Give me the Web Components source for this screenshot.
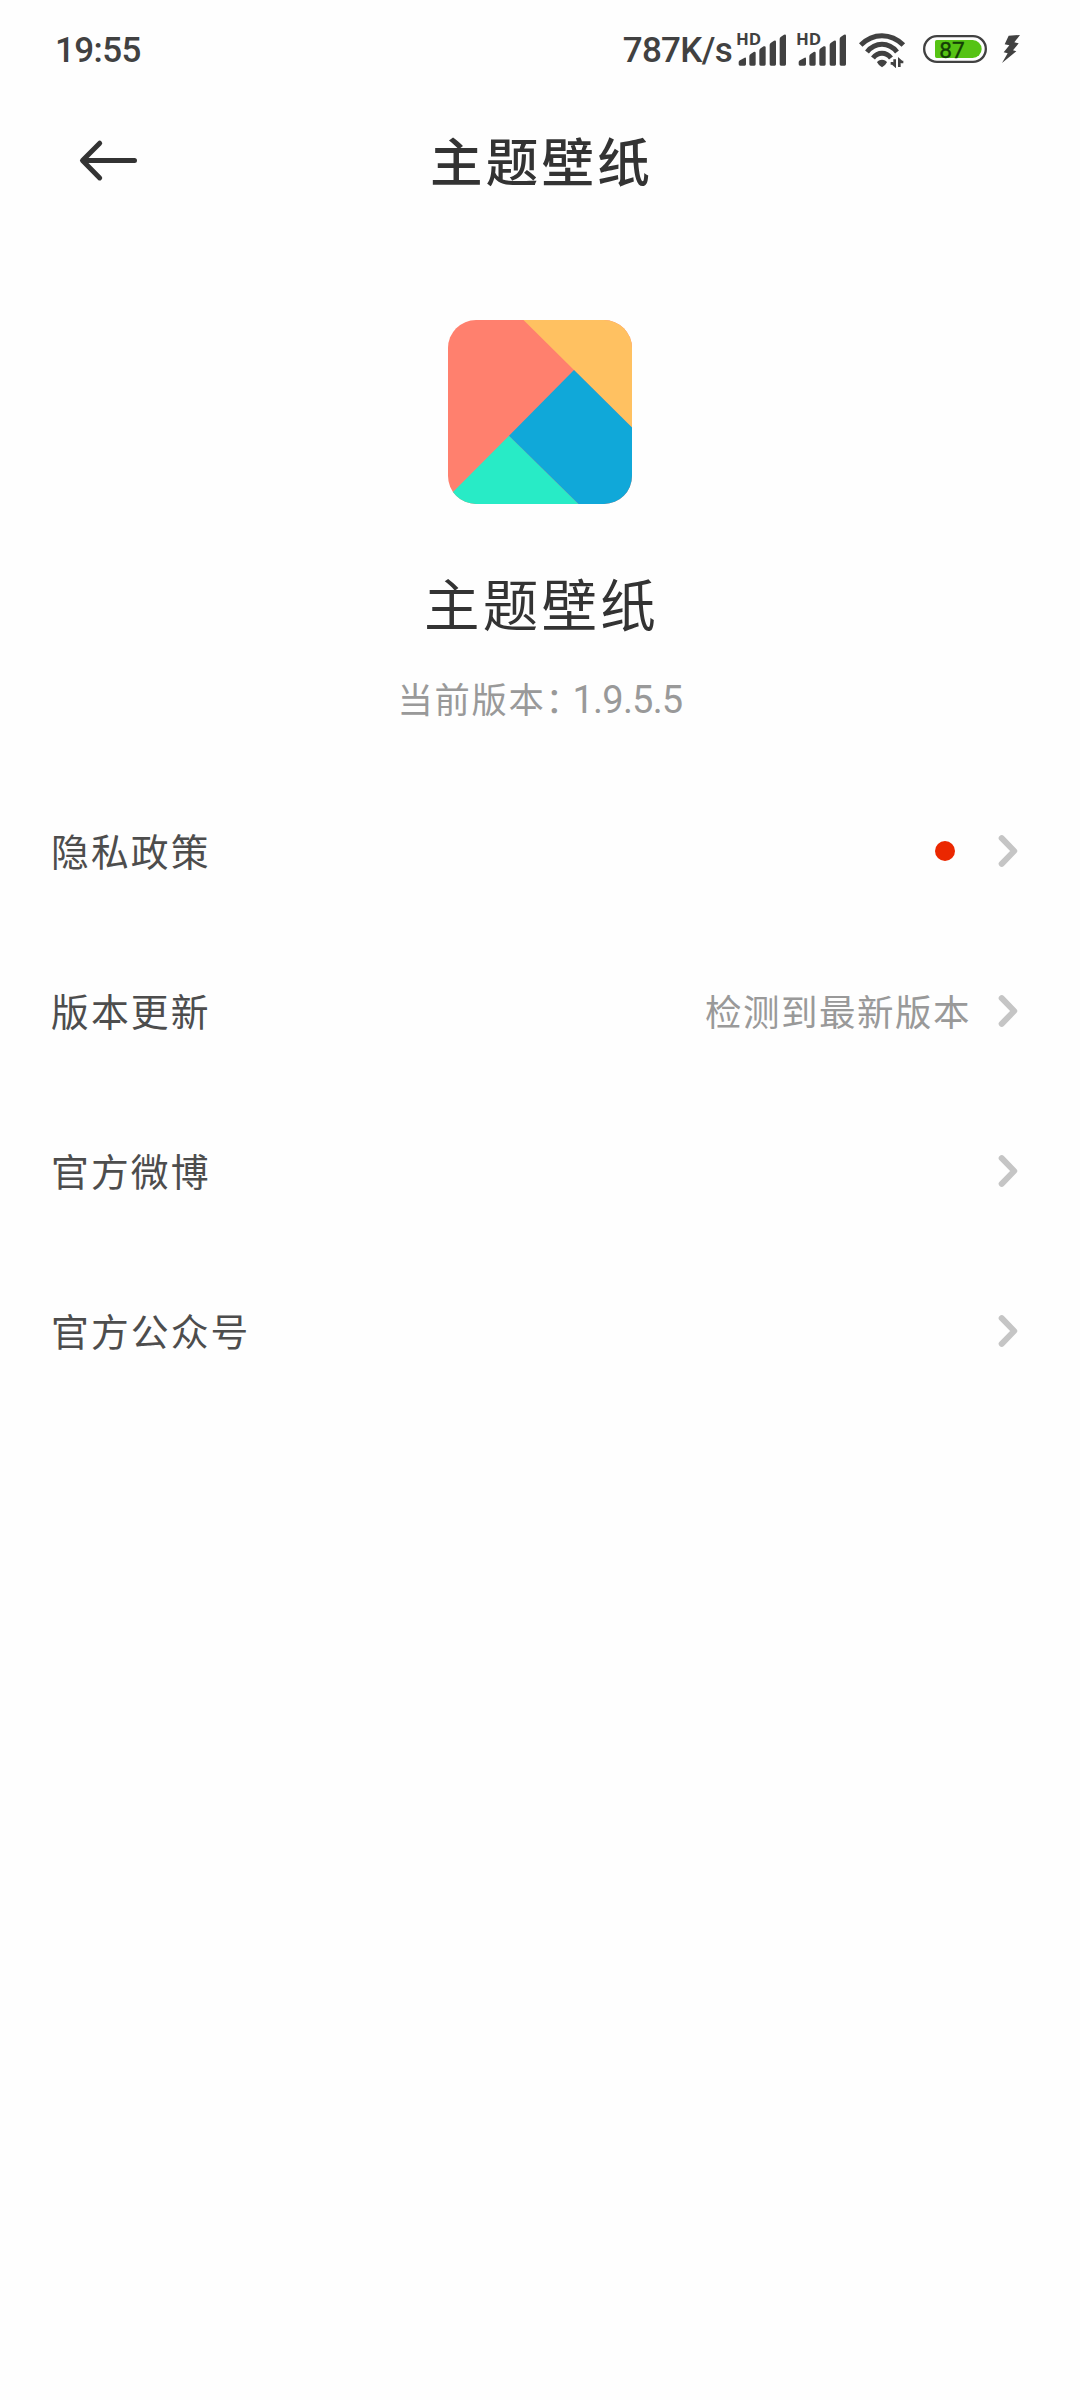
<!DOCTYPE html>
<html lang="zh-CN">
<head>
<meta charset="utf-8">
<title>主题壁纸</title>
<style>
html,body{margin:0;background:#fefefe}
body{width:1080px;min-height:2400px;font-family:Roboto,"Noto Sans CJK SC",sans-serif;color:#333}
</style>
</head>
<body>
<about-page></about-page>
<script>
const define = (name, html) => {
  const t = document.createElement('template');
  t.innerHTML = html;
  customElements.define(name, class extends HTMLElement {
    constructor() {
      super();
      this.attachShadow({mode: 'open'}).append(t.content.cloneNode(true));
    }
  });
};

define('signal-bars', `<style>:host{display:block;width:60px;height:34px;flex:none}svg{display:block;overflow:visible}</style>
<svg width="60" height="34" viewBox="0 0 180 102" fill="#414141">
<text x="-3" y="37" font-family="Open Sans,sans-serif" font-weight="700" font-size="49" textLength="76" lengthAdjust="spacingAndGlyphs">HD</text>
<path d="M5 88q0-4 4-6l14-8q4-1 4 3v17q0 4-4 4H9q-4 0-4-4z"/>
<path d="M37 70q0-5 4-7l9-6q6-2 6 3v34q0 4-4 4H41q-4 0-4-4z"/>
<path d="M67 53q0-5 4-7l9-6q6-2 6 3v51q0 4-4 4H71q-4 0-4-4z"/>
<path d="M98 36q0-5 4-7l9-6q6-2 6 3v68q0 4-4 4h-11q-4 0-4-4z"/>
<path d="M128 18q0-5 4-7l9-6q6-2 6 3v86q0 4-4 4h-11q-4 0-4-4z"/>
</svg>`);

define('wifi-icon', `<style>:host{display:block;width:48px;height:36px;flex:none}svg{display:block}</style>
<svg width="48" height="36" viewBox="0 0 144 108" fill="none" stroke="#414141" stroke-width="15">
<path d="M5 39Q33 11 69 11T133 39"/><path d="M24 60Q43 37 69 37T114 60"/><path d="M42 78Q53 64 69 64T96 78"/>
<path d="M54 91Q58 83 69 83T84 91Q81 98 69 106 57 98 54 91Z" fill="#414141" stroke="none"/>
<path d="M95 94h5l7 6V82M133 90h-5l-7-6v21" stroke-width="8"/></svg>`);

define('battery-icon', `<style>:host{display:block;width:64px;height:28px;flex:none}svg{display:block}</style>
<svg width="64" height="28" viewBox="0 0 192 84">
<rect x="3.5" y="3.5" width="185" height="77" rx="38.5" fill="#fefefe" stroke="#414141" stroke-width="7"/>
<path d="M41 15H149a27 27 0 0 1 0 54H41q-5 0-5-5V20q0-5 5-5z" fill="#56c314"/>
<text x="49" y="68" font-family="Roboto,sans-serif" font-size="68" font-weight="400" fill="#143f06" stroke="#143f06" stroke-width="1" textLength="76">87</text></svg>`);

define('charge-icon', `<style>:host{display:block;width:18px;height:28px;flex:none}svg{display:block}</style>
<svg width="18" height="28" viewBox="0 0 54 84"><path fill="#414141" d="M20 2L54 0 37 22 50 25 33 46 43 49 0 84 17 55 5 52 22 31 8 28Z"/></svg>`);

define('status-bar', `<style>
:host{display:flex;align-items:flex-start;box-sizing:border-box;height:98px;padding:33px 60px 0 55px;color:#414141;font-size:35px;line-height:34px;font-weight:500}
.time,.rate{padding-top:1px}
.time{flex:1;letter-spacing:-.6px}.rate{margin-right:5px;letter-spacing:-.7px}
wifi-icon{margin:-1px 16px 0 2px}battery-icon{margin:2px 15px 0 0}charge-icon{margin-top:2px}
</style><span class="time">19:55</span><span class="rate">787K/s</span><signal-bars></signal-bars><signal-bars></signal-bars><wifi-icon></wifi-icon><battery-icon></battery-icon><charge-icon></charge-icon>`);

define('title-bar', `<style>
:host{display:grid;grid-template-columns:80px 1fr 80px;align-items:center;height:126px;box-sizing:border-box}
svg{display:block;margin-left:80px;width:58px;overflow:visible}
h1{margin:0;padding:5px 0 0 3px;text-align:center;font-size:52.5px;line-height:70px;font-weight:500;letter-spacing:3.3px}
</style><svg width="58" height="40" viewBox="0 0 58 40" fill="none" stroke="#333" stroke-width="5" stroke-linecap="round" stroke-linejoin="round"><path d="M19.7 2.2L2.5 19.5 19.7 36.9M3 19.5H54.5"/></svg><h1><slot></slot></h1>`);

define('app-summary', `<style>
:host{display:flex;flex-direction:column;align-items:center;height:547px;box-sizing:border-box;padding-top:96px}
svg{display:block;border-radius:28px}
h2{margin:64px 0 0;font-size:55.5px;line-height:80px;font-weight:400;letter-spacing:3.2px;padding-left:3px}
p{margin:28px 0 0;display:flex;font-size:35.3px;line-height:50px;letter-spacing:1.7px;color:#999}
.num{font-size:38px;letter-spacing:-.8px;margin:-1px 0 0 -10px}
</style><svg width="184" height="184" viewBox="0 0 184 184"><path fill="#ff806e" d="M0 0H184V184H0z"/><path fill="#ffc161" d="M75.5 0H184V107.5z"/><path fill="#28ebc6" d="M-7 184L61 115.7 130.5 184z"/><path fill="#10a8d9" d="M126 50L184 107.5V184H130.5L61 115.7z"/></svg>
<h2><slot name="name"></slot></h2><p><span><slot name="label"></slot></span><span class="num"><slot name="version"></slot></span></p>`);

define('list-row', `<style>
:host{display:flex;align-items:center;height:160px;padding:0 62px 0 51px;color:#4d4d4d;font-size:37.8px;line-height:56px;letter-spacing:2.1px}
.label{flex:1;margin-top:4px}.value{color:#999;font-size:36.5px;letter-spacing:1.5px;margin-top:5px}
::slotted(red-dot){margin:-5px 16px 0 0}
svg{display:block;margin-left:27px}
</style><span class="label"><slot></slot></span><span class="value"><slot name="value"></slot></span>
<svg width="20" height="32" viewBox="0 0 20 32" fill="none" stroke="#c5c5c5" stroke-width="6" stroke-linecap="round" stroke-linejoin="round"><path d="M3.7 3.2L16.2 16 3.7 28.8"/></svg>`);

define('red-dot', `<style>:host{display:block;width:20px;height:20px;border-radius:50%;background:#eb2700}</style>`);

define('about-page', `<style>:host{display:block;width:1080px;height:2400px;background:#fefefe}</style>
<status-bar></status-bar>
<title-bar>主题壁纸</title-bar>
<app-summary><span slot="name">主题壁纸</span><span slot="label">当前版本：</span><span slot="version">1.9.5.5</span></app-summary>
<list-row>隐私政策<red-dot slot="value"></red-dot></list-row>
<list-row>版本更新<span slot="value">检测到最新版本</span></list-row>
<list-row>官方微博</list-row>
<list-row>官方公众号</list-row>`);
</script>
</body>
</html>
